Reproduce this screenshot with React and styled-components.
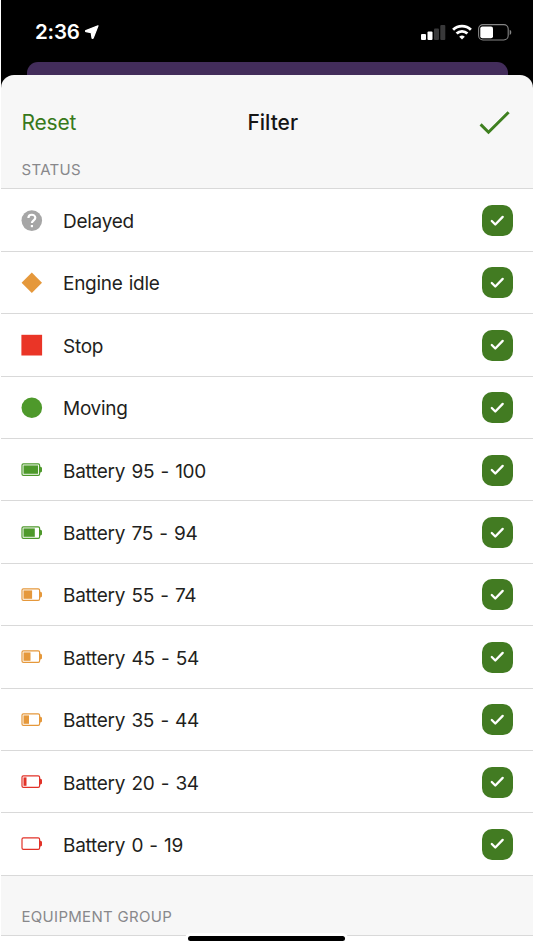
import styled, { createGlobalStyle } from 'styled-components';

const GlobalStyle = createGlobalStyle`
  * {
    box-sizing: border-box;
  }

  body {
    margin: 0;
    background: #fff;
    font-family: Inter, 'Liberation Sans', sans-serif;
  }

  svg {
    display: block;
    flex: none;
  }
`;

const Phone = styled.div`
  width: 532px;
  height: 950px;
  margin: 0 1px;
  overflow: hidden;
`;

const Backdrop = styled.div`
  height: 75px;
  background: #000;
`;

const StatusBar = styled.div`
  height: 62px;
  padding: 2px 21px 0 34px;
  display: flex;
  align-items: center;
  justify-content: space-between;
`;

const TimeGroup = styled.div`
  display: flex;
  align-items: center;
  gap: 4px;
`;

const Time = styled.span`
  color: #fff;
  font-size: 20.5px;
  font-weight: 600;
  line-height: 24px;
  letter-spacing: -0.2px;
`;

const Indicators = styled.div`
  display: flex;
  align-items: center;
  gap: 6px;
`;

const PreviousCard = styled.div`
  height: 13px;
  margin: 0 25px 0 26px;
  border-radius: 11px 11px 0 0;
  background: #432d5b;
`;

const SheetArea = styled.div`
  background: linear-gradient(#000 14px, #fff 14px);
`;

const Sheet = styled.div`
  border-radius: 13px 13px 0 0;
  background: #f7f7f7;
  overflow: hidden;
`;

const Header = styled.header`
  height: 80px;
  padding: 15px 23px 0 20.5px;
  display: grid;
  grid-template-columns: 1fr auto 1fr;
  align-items: center;
`;

const ResetButton = styled.button`
  justify-self: start;
  padding: 0;
  border: 0;
  background: none;
  color: #37791b;
  font: inherit;
  font-size: 21px;
  line-height: 28px;
  letter-spacing: -0.2px;
`;

const Title = styled.h1`
  margin: 0 0 0 14px;
  color: #151515;
  font-size: 21px;
  font-weight: 500;
  line-height: 28px;
`;

const DoneButton = styled.button`
  justify-self: end;
  padding: 0;
  border: 0;
  background: none;
`;

const SectionTitle = styled.h2`
  height: ${({ $height }) => $height}px;
  margin: 0;
  padding: 0 20.5px 9.5px;
  display: flex;
  align-items: flex-end;
  border-bottom: 1px solid #d9d9d9;
  color: #88888b;
  font-size: 15px;
  font-weight: 400;
  line-height: 18px;
  letter-spacing: 0.3px;
`;

const List = styled.ul`
  margin: 0;
  padding: 0;
  background: #fff;
  list-style: none;
`;

const Row = styled.li`
  height: 62.4px;
  padding: 1px 20px 0;
  display: flex;
  align-items: center;
  border-bottom: 1px solid #d9d9d9;
`;

const IconSlot = styled.span`
  width: 42px;
  flex: none;
`;

const Label = styled.span`
  flex: 1;
  padding-top: 2.8px;
  color: #1f1f21;
  font-size: 19px;
  line-height: 26px;
  letter-spacing: -0.28px;
  word-spacing: 1.2px;
`;

const Checkbox = styled.span`
  width: 31px;
  height: 31px;
  display: flex;
  align-items: center;
  justify-content: center;
  border-radius: 10px;
  background: #427b22;
`;

const BottomArea = styled.footer`
  height: 14px;
  background: #fff;
`;

const HomeIndicator = styled.div`
  position: relative;
  left: -0.5px;
  width: 157px;
  height: 5px;
  margin: 0 auto;
  border-radius: 3px;
  background: #000;
  box-shadow: 0 0 0 3px #fff;
`;

const LocationIcon = () => (
  <svg width="16" height="16" viewBox="0 0 16 16">
    <path
      d="M14 1.8 1.9 6.6c-.6.3-.4 1 .2 1.1l5.1.9.8 5.2c.1.7.9.8 1.2.2Z"
      fill="#fff"
      stroke="#fff"
      strokeWidth="1.2"
      strokeLinejoin="round"
    />
  </svg>
);

const SignalIcon = () => (
  <svg width="25" height="17" viewBox="0 0 25 17">
    <rect x="0" y="10" width="5" height="6" rx="1" fill="#fff" />
    <rect x="6.5" y="7.5" width="5" height="8.5" rx="1" fill="#fff" />
    <rect x="13" y="4.5" width="5" height="11.5" rx="1" fill="#39393a" />
    <rect x="19.3" y="1" width="5" height="15" rx="1" fill="#39393a" />
  </svg>
);

const WifiIcon = () => (
  <svg width="20" height="16" viewBox="0 0 20 16" fill="none" stroke="#fff" strokeWidth="2.8">
    <path d="M1.1 5.8a12.7 12.7 0 0 1 17.8 0" />
    <path d="M4.6 9.6a7.7 7.7 0 0 1 10.8 0" />
    <path d="m10 15.6-2.8-2.8a4 4 0 0 1 5.6 0Z" fill="#fff" stroke="none" />
  </svg>
);

const PhoneBatteryIcon = () => (
  <svg width="34" height="17" viewBox="0 0 34 17">
    <rect x="0.6" y="0.6" width="29.6" height="15.4" rx="4.4" fill="none" stroke="#858585" strokeWidth="1.1" />
    <rect x="2.3" y="2.4" width="12.7" height="11.8" rx="2" fill="#fff" />
    <path d="M31.7 5.7c2.1.7 2.1 4.5 0 5.2Z" fill="#858585" />
  </svg>
);

const DoneIcon = () => (
  <svg width="32" height="25" viewBox="0 0 32 25">
    <path d="m2.6 14.4 7.9 7.8L30.6 2.2" fill="none" stroke="#3f8020" strokeWidth="3" />
  </svg>
);

const CheckIcon = () => (
  <svg width="15" height="12" viewBox="0 0 15 12">
    <path
      d="m1.8 6 3.5 3.5 7.4-7.6"
      fill="none"
      stroke="#fff"
      strokeWidth="2.3"
      strokeLinecap="round"
      strokeLinejoin="round"
    />
  </svg>
);

const DelayedIcon = () => (
  <svg width="22" height="22" viewBox="0 0 22 22">
    <circle cx="10.8" cy="10.6" r="10.3" fill="#a6a6a6" />
    <path
      d="M7.4 8c0-4.3 6.9-4.3 6.9-.2 0 2.4-3.4 2.7-3.4 5.3"
      fill="none"
      stroke="#fff"
      strokeWidth="2.2"
    />
    <rect x="9.8" y="15" width="2.2" height="2.2" fill="#fff" />
  </svg>
);

const IdleIcon = () => (
  <svg width="22" height="22" viewBox="0 0 22 22">
    <path d="M10.8.6 21 10.8 10.8 21 .6 10.8Z" fill="#e5983b" />
  </svg>
);

const StopIcon = () => (
  <svg width="22" height="22" viewBox="0 0 22 22">
    <rect x="0.4" y="0.8" width="20.7" height="20.7" fill="#ea3527" />
  </svg>
);

const MovingIcon = () => (
  <svg width="22" height="22" viewBox="0 0 22 22">
    <circle cx="10.8" cy="10.8" r="10.3" fill="#4e992b" />
  </svg>
);

const BatteryIcon = ({ color, level }) => (
  <svg width="22" height="16" viewBox="0 0 22 16">
    <rect x="1" y="1.9" width="17.6" height="11.4" rx="1.4" fill="none" stroke={color} strokeWidth="1.2" />
    <rect x="2.5" y="3.4" width={level} height="8.4" fill={color} />
    <path d="M18.8 4.8h1l1.2 1v3.6l-1.2 1h-1Z" fill={color} />
  </svg>
);

const GREEN = '#4e992b';
const ORANGE = '#e5983b';
const RED = '#e23228';

const statuses = [
  { label: 'Delayed', icon: <DelayedIcon /> },
  { label: 'Engine idle', icon: <IdleIcon /> },
  { label: 'Stop', icon: <StopIcon /> },
  { label: 'Moving', icon: <MovingIcon /> },
  { label: 'Battery 95 - 100', icon: <BatteryIcon color={GREEN} level={14.6} /> },
  { label: 'Battery 75 - 94', icon: <BatteryIcon color={GREEN} level={11.3} /> },
  { label: 'Battery 55 - 74', icon: <BatteryIcon color={ORANGE} level={8.6} /> },
  { label: 'Battery 45 - 54', icon: <BatteryIcon color={ORANGE} level={7} /> },
  { label: 'Battery 35 - 44', icon: <BatteryIcon color={ORANGE} level={5.5} /> },
  { label: 'Battery 20 - 34', icon: <BatteryIcon color={RED} level={3} /> },
  { label: 'Battery 0 - 19', icon: <BatteryIcon color={RED} level={0} /> },
];

const App = () => {
  return (
    <>
      <GlobalStyle />
      <Phone>
        <Backdrop>
          <StatusBar>
            <TimeGroup>
              <Time>2:36</Time>
              <LocationIcon />
            </TimeGroup>
            <Indicators>
              <SignalIcon />
              <WifiIcon />
              <PhoneBatteryIcon />
            </Indicators>
          </StatusBar>
          <PreviousCard />
        </Backdrop>
        <SheetArea>
          <Sheet>
            <Header>
              <ResetButton>Reset</ResetButton>
              <Title>Filter</Title>
              <DoneButton aria-label="Done">
                <DoneIcon />
              </DoneButton>
            </Header>
            <SectionTitle $height={34.4}>STATUS</SectionTitle>
            <List>
              {statuses.map(({ label, icon }) => (
                <Row key={label}>
                  <IconSlot>{icon}</IconSlot>
                  <Label>{label}</Label>
                  <Checkbox>
                    <CheckIcon />
                  </Checkbox>
                </Row>
              ))}
            </List>
            <SectionTitle $height={60.6}>EQUIPMENT GROUP</SectionTitle>
            <BottomArea>
              <HomeIndicator />
            </BottomArea>
          </Sheet>
        </SheetArea>
      </Phone>
    </>
  );
};

export default App;
